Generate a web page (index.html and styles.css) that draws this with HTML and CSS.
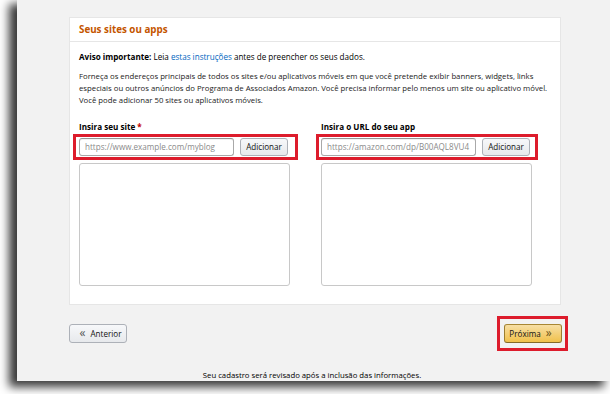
FILE: index.html
```html
<!DOCTYPE html>
<html lang="pt-BR">
<head>
<meta charset="utf-8">
<link rel="stylesheet" href="styles.css">
</head>
<body>
<div class="screen">
  <div class="card">
    <div class="card-head">Seus sites ou apps</div>
    <div class="card-body">
      <p class="notice"><b>Aviso importante:</b> Leia <a class="link">estas instruções</a> antes de preencher os seus dados.</p>
      <p class="desc">Forneça os endereços principais de todos os sites e/ou aplicativos móveis em que você pretende exibir banners, widgets, links especiais ou outros anúncios do Programa de Associados Amazon. Você precisa informar pelo menos um site ou aplicativo móvel. Você pode adicionar 50 sites ou aplicativos móveis.</p>
      <div class="cols">
        <div class="col">
          <div class="label">Insira seu site <span class="req">*</span></div>
          <div class="row hl hl-left">
            <div class="input">https://www.example.com/myblog</div>
            <div class="btn">Adicionar</div>
          </div>
          <div class="area"></div>
        </div>
        <div class="col">
          <div class="label">Insira o URL do seu app</div>
          <div class="row hl hl-right">
            <div class="input">https://amazon.com/dp/B00AQL8VU4</div>
            <div class="btn">Adicionar</div>
          </div>
          <div class="area"></div>
        </div>
      </div>
    </div>
  </div>
  <div class="nav">
    <div class="btn nav-btn prev"><span class="chev">«</span>Anterior</div>
    <div class="btn nav-btn next hl hl-next">Próxima<span class="chev">»</span></div>
  </div>
  <div class="footer">Seu cadastro será revisado após a inclusão das informações.</div>
</div>
</body>
</html>
```
FILE: styles.css
```css
html, body {
  margin: 0;
  padding: 0;
  background: #ffffff;
  overflow: hidden;
}
body {
  width: 610px;
  height: 394px;
  font-family: "Open Sans", "Liberation Sans", sans-serif;
  font-size: 8.1px;
  color: #111;
}
.screen {
  margin-left: 17px;
  width: 593px;
  height: 381px;
  background: #f2f2f2;
  box-shadow: -7px 5px 9px 1px #3a3a3a;
  padding-top: 17px;
  box-sizing: border-box;
  display: flex;
  flex-direction: column;
}
.card {
  margin-left: 52px;
  width: 492px;
  background: #fff;
  border: 1px solid #e6e6e6;
  box-sizing: border-box;
}
.card-head {
  height: 24px;
  line-height: 23px;
  padding-left: 9px;
  color: #c45500;
  font-weight: 700;
  font-size: 9.8px;
  border-bottom: 1px solid #e6e6e6;
  box-sizing: border-box;
}
.card-body {
  padding: 9px 9px 18px;
}
.notice {
  margin: 0 0 7px;
  line-height: 12px;
  color: #000;
}
.link {
  color: #0066c0;
}
.desc {
  margin: 0 0 15px;
  line-height: 12px;
  color: #222;
  font-size: 7.75px;
}
.cols {
  display: grid;
  grid-template-columns: 211px 211px;
  column-gap: 31px;
}
.label {
  font-weight: 700;
  line-height: 12px;
  margin-bottom: 5px;
  color: #000;
}
.req {
  color: #c40000;
}
.row {
  display: flex;
  gap: 6px;
  height: 18px;
  margin-bottom: 7px;
}
.hl {
  position: relative;
}
.hl::after {
  content: "";
  position: absolute;
  border: 3px solid #dd1c2c;
  pointer-events: none;
}
.hl-left::after {
  inset: -4px -8px -4px -6px;
}
.hl-right::after {
  inset: -4px -6px -4px -5px;
}
.hl-next::after {
  inset: -9px -7px -9px -8px;
}
.input {
  width: 155px;
  border: 1px solid #a9a9a9;
  border-top-color: #949494;
  border-radius: 3px;
  box-sizing: border-box;
  color: #8a8a8a;
  line-height: 16px;
  padding-left: 5px;
  white-space: nowrap;
  overflow: hidden;
  box-shadow: inset 0 1px 0 rgba(0,0,0,.05);
}
.btn {
  width: 48px;
  box-sizing: border-box;
  border: 1px solid #adb1b8;
  border-radius: 3px;
  background: linear-gradient(#f7f8fa, #e7e9ec);
  text-align: center;
  line-height: 16px;
  color: #111;
  white-space: nowrap;
}
.area {
  height: 123px;
  border: 1px solid #c8c8c8;
  border-radius: 3px;
  box-sizing: border-box;
  width: 211px;
}
.nav {
  display: flex;
  justify-content: space-between;
  margin: 19px 0 0 52px;
  width: 493px;
}
.nav-btn {
  height: 19px;
  line-height: 17px;
  padding: 0;
}
.prev {
  width: 58px;
}
.next {
  width: 58px;
  background: linear-gradient(#f7dfa5, #f0c14b);
  border-color: #a88734 #9c7e31 #846a29;
}
.chev {
  color: #555;
  font-size: 12px;
  line-height: 15px;
  vertical-align: top;
  margin: 0 5px;
}
.next .chev {
  color: #6a5216;
}
.footer {
  margin-top: auto;
  text-align: center;
  line-height: 12px;
  font-size: 7.75px;
  color: #000;
  margin-left: -3px;
}
```
